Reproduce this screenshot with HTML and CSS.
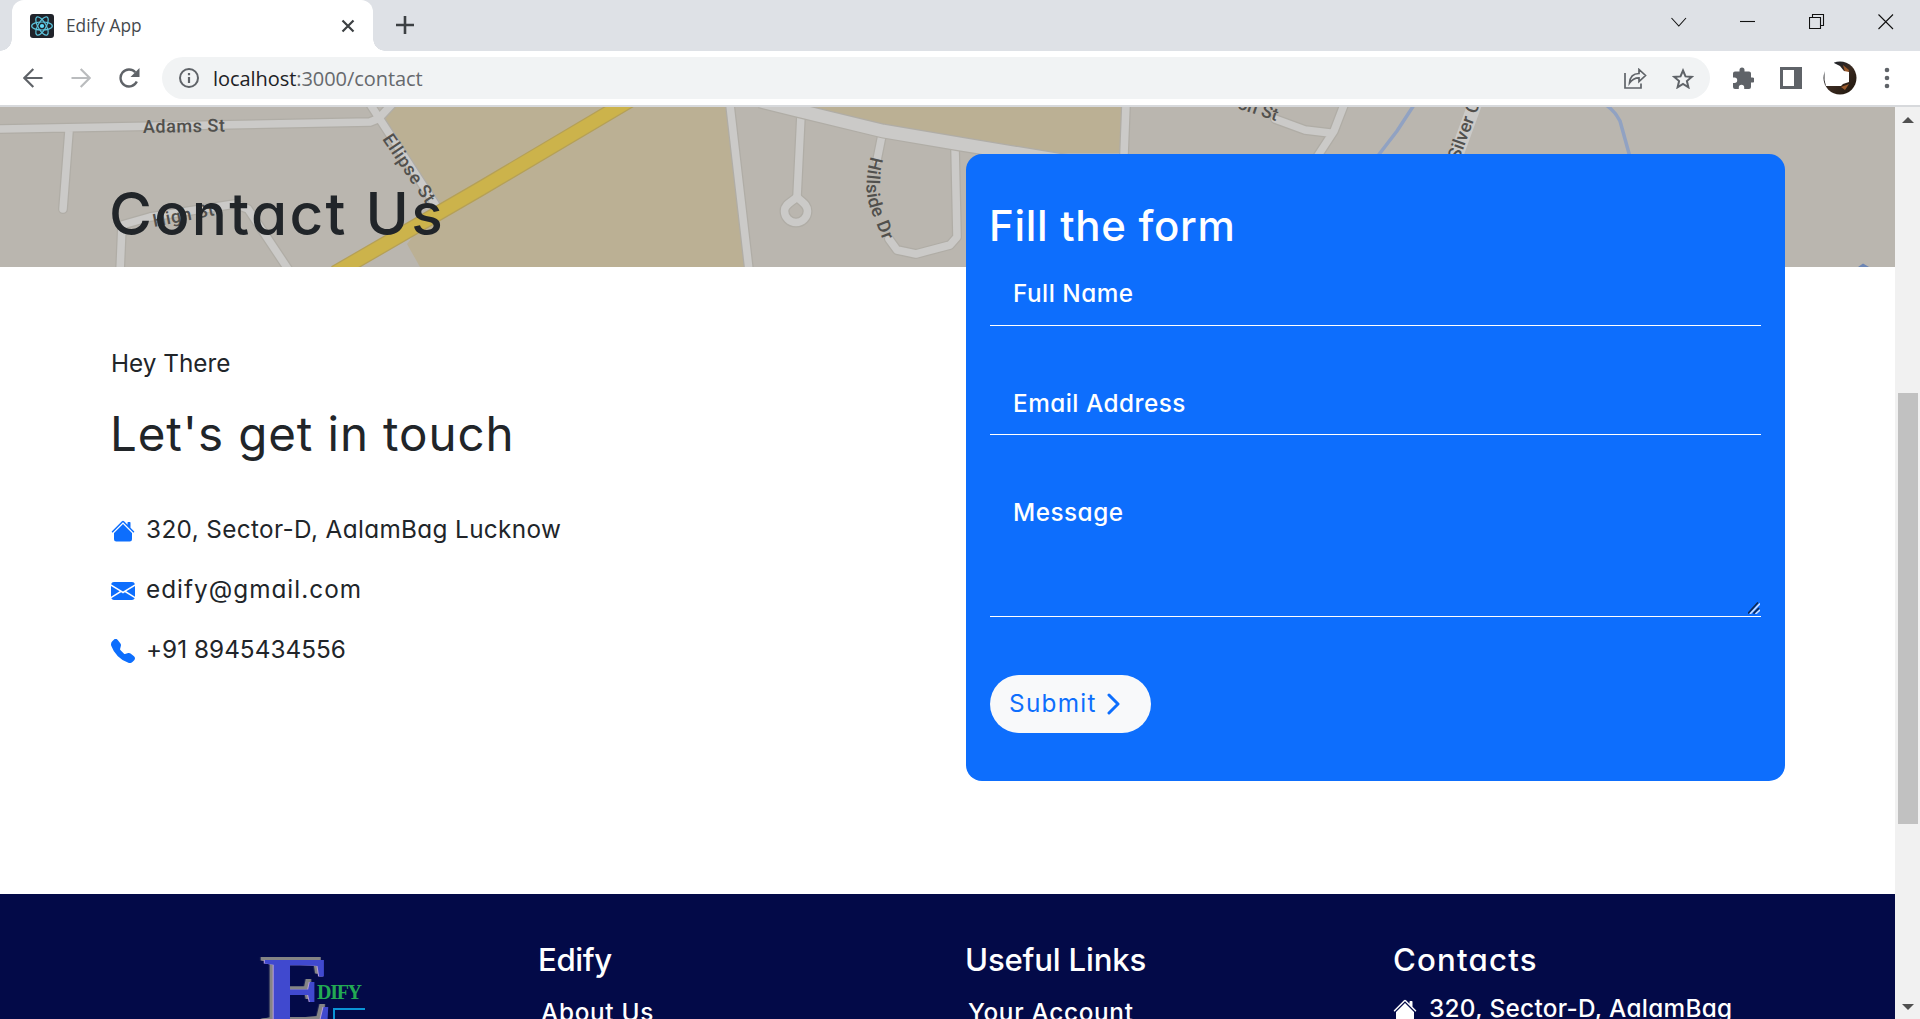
FILE: index.html
```html
<!DOCTYPE html>
<html lang="en">
<head>
<meta charset="utf-8">
<title>Edify App</title>
<link rel="stylesheet" href="styles.css">
</head>
<body>
<div class="tabstrip">
  <div class="tab">
    <svg class="favicon" width="24" height="24" viewBox="0 0 24 24"><rect width="24" height="24" rx="3" fill="#20232a"/><g fill="none" stroke="#5cc5de" stroke-width="1.2"><ellipse cx="12" cy="12" rx="10.3" ry="4"/><ellipse cx="12" cy="12" rx="10.3" ry="4" transform="rotate(60 12 12)"/><ellipse cx="12" cy="12" rx="10.3" ry="4" transform="rotate(120 12 12)"/></g><circle cx="12" cy="12" r="2.1" fill="#61dafb"/></svg>
    <span class="tab-title">Edify App</span>
    <svg class="tab-close" width="14" height="14" viewBox="0 0 14 14"><path d="M1.5 1.5l11 11M12.500 1.500l-11 11" stroke="#3c4043" stroke-width="2.2"/></svg>
  </div>
  <svg class="new-tab" width="18" height="18" viewBox="0 0 18 18"><path d="M9 0v18M0 9h18" stroke="#3c4043" stroke-width="2.6"/></svg>
  <div class="window-controls">
    <svg width="16" height="16" viewBox="0 0 16 16"><path d="M.5 4l7.300 8L15 4"/></svg>
    <svg width="16" height="16" viewBox="0 0 16 16"><path d="M0 7.500h15"/></svg>
    <svg width="16" height="16" viewBox="0 0 16 16"><path d="M.5 3.500h11v11H.5zM3.500 3.500v-3h11v11h-3"/></svg>
    <svg width="16" height="16" viewBox="0 0 16 16"><path d="M.5 .5l14.500 14.500M15 .5L.5 15"/></svg>
  </div>
</div>
<div class="toolbar">
  <svg class="nav" width="20" height="20" viewBox="0 0 20 20"><path d="M19.500 10H1.500M10.300 1L1.300 10l9 9" fill="none" stroke="#5f6368" stroke-width="2.200"/></svg>
  <svg class="nav" width="20" height="20" viewBox="0 0 20 20"><path d="M.5 10h18M9.700 1l9 9-9 9" fill="none" stroke="#babcbe" stroke-width="2.200"/></svg>
  <svg class="nav reload" width="22" height="20" viewBox="0 0 22 20"><path d="M17.800 13.500A8.500 8.500 0 1 1 16.300 4.200" fill="none" stroke="#5f6368" stroke-width="2.400"/><path d="M20.500 0v9h-9z" fill="#5f6368"/></svg>
  <div class="omnibox">
    <svg width="20" height="20" viewBox="0 0 20 20"><circle cx="10" cy="10" r="9" fill="none" stroke="#5f6368" stroke-width="2"/><path d="M10 5v2.200M10 9v6" stroke="#5f6368" stroke-width="2.200"/></svg>
    <span class="url">localhost<span class="url-rest">:3000/contact</span></span>
    <svg class="share" width="23" height="21" viewBox="0 0 23 21"><path d="M1 5v15h16v-4.500M5.500 15C6 8.500 10 5.500 15 5.500V1.500l6.500 6L15 13.500V9.800c-4 0-7 1.500-9.500 5.200z" fill="none" stroke="#5f6368" stroke-width="1.700"/></svg>
    <svg width="22" height="21" viewBox="0 0 22 21"><path d="M11 2.500l2.500 5.900 6.200.5-4.800 4.200 1.500 6.200L11 16l-5.400 3.300 1.500-6.200L2.300 8.900l6.200-.5z" fill="none" stroke="#5f6368" stroke-width="2"/></svg>
  </div>
  <svg class="puzzle" width="22" height="22" viewBox="0 0 22 22"><path d="M20.500 10.500H19V6.500a2 2 0 0 0-2-2h-4.500V3a2.500 2.500 0 0 0-5 0v1.500H3a2 2 0 0 0-2 2v4h1.500a2.700 2.700 0 0 1 0 5.400H1V20a2 2 0 0 0 2 2h3.800v-1.500a2.700 2.700 0 0 1 5.400 0V22H17a2 2 0 0 0 2-2v-4.500h1a2.500 2.500 0 0 0 .5-5z" fill="#5f6368"/></svg>
  <svg class="panel" width="22" height="22" viewBox="0 0 22 22"><path d="M0 0h22v22H0zM3 3v16h11V3z" fill="#5f6368" fill-rule="evenodd"/></svg>
  <svg class="avatar" width="34" height="34" viewBox="0 0 34 34"><defs><linearGradient id="av" x1="0" y1="0" x2="1" y2="1"><stop offset="0" stop-color="#10202f"/><stop offset=".5" stop-color="#3a2a20"/><stop offset="1" stop-color="#1d150c"/></linearGradient></defs><circle cx="17" cy="17" r="16.500" fill="url(#av)"/><path d="M20 4l6 5-1 5-3-3zM18 26l8-3-4 6z" fill="#9a5a2c"/><path d="M0 0h11v2l6 3 4 5 5 1v10l-6 2-2 2H3l-1.500-6V9L0 12z" fill="#fff"/></svg>
  <svg class="menu" width="6" height="22" viewBox="0 0 6 22"><g fill="#5f6368"><circle cx="3" cy="3" r="2.300"/><circle cx="3" cy="11" r="2.300"/><circle cx="3" cy="19" r="2.300"/></g></svg>
</div>
<div class="viewport">
  <main class="page">
    <header class="banner">
      <svg class="map" width="1895" height="160" viewBox="0 0 1895 160">
        <g fill="#bbb094"><path d="M392 0l-9 16 57 79-33 42 13 23h328L730 0z"/><path d="M808 0l75 18 77 12 100 16h64l2-46z"/></g>
        <g class="road-edge">
          <path d="M0 22L370 15l10-4M69 24l-6 78M370-3l65 100M380 10l13-14M120 165l2-47 28-8 85-13 13 5 42 63"/>
          <path d="M730-2l19 165M801 8l-4 82M882 28l-5 25M889 132l8 11 19 4 34-9 7-8-2-90M1126-2l-2 50M1275 12l30 11 25 3M1344-2l-10 26-17 26"/>
          <path d="M797 90c-5 5-12.500 7-12.500 14a11.500 11.500 0 0 0 23 0c0-7-6-9-10.500-14z"/>
        </g>
        <g class="road">
          <path d="M0 22L370 15l10-4M69 24l-6 78M370-3l65 100M380 10l13-14M120 165l2-47 28-8 85-13 13 5 42 63"/>
          <path d="M730-2l19 165M801 8l-4 82M882 28l-5 25M889 132l8 11 19 4 34-9 7-8-2-90M1126-2l-2 50M1275 12l30 11 25 3M1344-2l-10 26-17 26"/>
          <path d="M797 90c-5 5-12.500 7-12.500 14a11.500 11.500 0 0 0 23 0c0-7-6-9-10.500-14z"/>
        </g>
        <path d="M760-6l40 10 83 20 77 13 110 18" fill="none" stroke="#b0ada6" stroke-width="15"/>
        <path d="M760-6l40 10 83 20 77 13 110 18" fill="none" stroke="#cbcac8" stroke-width="12.500"/>
        <path d="M1452 60l24-66" fill="none" stroke="#cbcac8" stroke-width="14"/>
        <path d="M335 166L480 82 632-8" fill="none" stroke="#b5a057" stroke-width="15.500"/>
        <path d="M335 166L480 82 632-8" fill="none" stroke="#ccb34b" stroke-width="13"/>
        <g fill="none" stroke="#91a2c2" stroke-width="3.500"><path d="M1414-2l-17 26-20 26M1606-2q9 6 14 16l10 36"/></g>
        <path d="M1858 160l5-3.500 6 3.500z" fill="#6c85b4"/>
        <g class="street">
          <text transform="translate(143 26) rotate(-1)" textLength="82">Adams St</text>
          <text transform="translate(382 32) rotate(56)" textLength="79">Ellipse St</text>
          <text transform="translate(154 120) rotate(-11)" textLength="62">High St</text>
          <path id="hillside" d="M871 49Q861 84 873 108L884 136" fill="none"/>
          <text textLength="88"><textPath href="#hillside">Hillside Dr</textPath></text>
          <text transform="translate(1276 14) rotate(18)" text-anchor="end">on St</text>
          <text transform="translate(1459 54) rotate(-70)">Silver C</text>
        </g>
      </svg>
      <h1>Contact Us</h1>
    </header>
    <section class="contact">
      <div class="info">
        <p class="hello">Hey There</p>
        <h2>Let's get in touch</h2>
        <ul class="details">
          <li><svg class="icon" viewBox="0 0 16 16"><path d="M8.707 1.500a1 1 0 0 0-1.414 0L.646 8.146a.5.5 0 0 0 .708.708L8 2.207l6.646 6.647a.5.5 0 0 0 .708-.708L13 5.793V2.500a.5.5 0 0 0-.5-.5h-1a.5.5 0 0 0-.5.5v1.293z"/><path d="m8 3.293 6 6V13.500a1.500 1.500 0 0 1-1.500 1.500h-9A1.500 1.500 0 0 1 2 13.500V9.293z"/></svg><span class="street-address">320, Sector-D, AalamBag Lucknow</span></li>
          <li><svg class="icon" viewBox="0 0 16 16"><path d="M.05 3.555A2 2 0 0 1 2 2h12a2 2 0 0 1 1.950 1.555L8 8.414zM0 4.697v7.104l5.803-3.558zM6.761 8.830l-6.570 4.027A2 2 0 0 0 2 14h12a2 2 0 0 0 1.808-1.144l-6.570-4.027L8 9.586zM10.197 8.244L16 11.801V4.697z"/></svg><span class="email">edify@gmail.com</span></li>
          <li><svg class="icon" viewBox="0 0 16 16"><path d="M1.885.511a1.745 1.745 0 0 1 2.610.163L6.290 2.980c.329.423.445.974.315 1.494l-.547 2.190a.678.678 0 0 0 .178.643l2.457 2.457a.678.678 0 0 0 .644.178l2.189-.547a1.745 1.745 0 0 1 1.494.315l2.306 1.794c.829.645.905 1.870.163 2.611l-1.034 1.034c-.74.74-1.846 1.065-2.877.702a18.634 18.634 0 0 1-7.010-4.420 18.634 18.634 0 0 1-4.420-7.009c-.362-1.030-.037-2.137.703-2.877z"/></svg><span class="phone">+91 8945434556</span></li>
        </ul>
      </div>
      <form class="card">
        <h3>Fill the form</h3>
        <div class="field"><span>Full Name</span></div>
        <div class="field"><span>Email Address</span></div>
        <div class="field message"><span>Message</span>
          <svg class="grip" width="12" height="12" viewBox="0 0 12 12"><path d="M0 11.500L10 .5M5.500 11.500L11 6" stroke="#10284f" stroke-width="1.600"/><path d="M2 12L12 1.500M7.500 12L12 8" stroke="#cfe0ff" stroke-width="1.600"/></svg>
        </div>
        <button class="submit" type="button"><span>Submit</span><svg width="14" height="22" viewBox="0 0 14 22"><path d="M2 2l9 9-9 9" fill="none" stroke="#0d6efd" stroke-width="3" stroke-linecap="round" stroke-linejoin="round"/></svg></button>
      </form>
    </section>
    <footer class="footer">
      <svg class="logo" width="110" height="70" viewBox="0 0 110 70">
        <text class="logo-e" transform="translate(5 76) scale(1.06 1)">E</text>
        <text class="logo-word" x="59" y="50" textLength="45">DIFY</text>
        <path d="M76 70V60h31" fill="none" stroke="#0a94d6" stroke-width="2"/>
      </svg>
      <div class="col"><h4 class="brand">Edify</h4><p class="link">About Us</p></div>
      <div class="col"><h4 class="useful">Useful Links</h4><p class="link">Your Account</p></div>
      <div class="col"><h4 class="contacts">Contacts</h4><p class="address"><svg class="icon" viewBox="0 0 16 16"><path d="M8.707 1.500a1 1 0 0 0-1.414 0L.646 8.146a.5.5 0 0 0 .708.708L8 2.207l6.646 6.647a.5.5 0 0 0 .708-.708L13 5.793V2.500a.5.5 0 0 0-.5-.5h-1a.5.5 0 0 0-.5.5v1.293z"/><path d="m8 3.293 6 6V13.500a1.500 1.500 0 0 1-1.500 1.500h-9A1.500 1.500 0 0 1 2 13.500V9.293z"/></svg><span>320, Sector-D, AalamBag</span></p></div>
    </footer>
  </main>
  <div class="scrollbar"><i class="arrow up"></i><i class="thumb"></i><i class="arrow down"></i></div>
</div>
</body>
</html>
```
FILE: styles.css
```css
* { box-sizing: border-box; }
body { margin: 0; width: 1920px; height: 1019px; overflow: hidden; display: flex; flex-direction: column; background: #fff; color: #212529; font-family: Inter, "Open Sans", sans-serif; font-feature-settings: "cv11"; }
h1, h2, h3, h4, p, ul { margin: 0; padding: 0; font-weight: 500; white-space: nowrap; }
svg { flex: none; display: block; }

.tabstrip { flex: none; height: 51px; background: #dee1e6; display: flex; padding-left: 12px; }
.tab { position: relative; width: 361px; background: #fff; border-radius: 12px 12px 0 0; display: flex; align-items: center; padding: 0 18px 0 18px; }
.tab::before, .tab::after { content: ""; position: absolute; bottom: 0; width: 12px; height: 12px; }
.tab::before { left: -12px; background: radial-gradient(circle at 0 0, transparent 11.5px, #fff 12px); }
.tab::after { right: -12px; background: radial-gradient(circle at 100% 0, transparent 11.5px, #fff 12px); }
.tab-title { margin: 0 0 0 12px; font: 17.300px/24px "Open Sans", sans-serif; color: #45494d; white-space: nowrap; }
.tab-close { margin-left: auto; }
.new-tab { margin: 16px 0 0 23px; }
.window-controls { margin: 14px 26px 0 auto; display: flex; gap: 53px; }
.window-controls path { fill: none; stroke: #111; stroke-width: 1.1; }

.toolbar { flex: none; height: 56px; border-bottom: 2px solid #d7d9dc; display: flex; align-items: center; padding-left: 23px; }
.nav { margin-right: 28px; }
.reload { margin-right: 21px; }
.omnibox { width: 1548px; height: 42px; border-radius: 21px; background: #f1f3f4; display: flex; align-items: center; padding: 0 16px 0 17px; }
.url { margin: 1px 0 0 14px; font: 20px/28px "Open Sans", sans-serif; letter-spacing: -.06px; color: #202124; white-space: nowrap; }
.url-rest { color: #66696d; }
.share { margin: 0 25px 0 auto; }
.puzzle { margin-left: 22px; }
.panel { margin-left: 26px; }
.avatar { margin-left: 21px; }
.menu { margin-left: 27px; }

.viewport { flex: 1; min-height: 0; display: flex; }
.page { width: 1895px; overflow: hidden; display: flex; flex-direction: column; }
.banner { position: relative; flex: none; height: 160px; background: #bab6af; padding: 71px 0 0 109px; }
.map { position: absolute; inset: 0; }
.road, .road-edge { fill: none; stroke: #cbcac8; stroke-width: 7.500; stroke-linecap: round; stroke-linejoin: round; }
.road-edge { stroke: #b0ada6; stroke-width: 10; }
.street { font: 500 18px Roboto, sans-serif; fill: #51504d; stroke: none; }
h1 { position: relative; font-size: 58.500px; line-height: 72px; letter-spacing: 2.300px; }

.contact { flex: none; height: 627px; display: flex; justify-content: space-between; align-items: flex-start; padding: 0 110px 0 111px; }
.info { padding-top: 78px; }
.hello { font-size: 24.300px; line-height: 36px; font-weight: 400; }
h2 { margin-top: 24px; font-size: 47.500px; line-height: 58px; font-weight: 400; letter-spacing: .9px; margin-left: -1px; }
.details { margin-top: 48px; list-style: none; display: flex; flex-direction: column; gap: 24px; font-size: 24.300px; line-height: 36px; }
.details li { display: flex; align-items: center; gap: 11px; font-weight: 400; }
.icon { width: 24px; height: 24px; margin-top: 3px; fill: #0d6efd; }
.street-address { letter-spacing: .37px; }
.email { letter-spacing: 1.030px; }
.phone { letter-spacing: .03px; }

.card { position: relative; margin-top: -113px; width: 819px; height: 627px; border-radius: 16px; background: #0d6efd; color: #fff; padding: 47px 24px 48px; }
h3 { font-size: 42px; line-height: 50px; letter-spacing: .7px; margin-left: -1px; }
.field { height: 56px; margin: 19px 0 53px; border-bottom: 1px solid #fff; padding: 5px 23px; font-size: 24.300px; line-height: 36px; font-weight: 500; letter-spacing: .5px; white-space: nowrap; }
.field + .field { margin-top: 0; padding-top: 6px; }
.field.message { position: relative; height: 129px; margin-bottom: 58px; }
.grip { position: absolute; right: 1px; bottom: 2px; }
.submit { width: 161px; height: 58px; border: 0; border-radius: 29px; background: #f8f9fa; color: #0d6efd; display: flex; align-items: center; gap: 12px; padding: 0 19px; font: 400 24.300px/36px Inter, sans-serif; font-feature-settings: "cv11"; letter-spacing: 1.300px; }
.submit span { margin: -3px -1.300px 0 0; }

.footer { flex: none; height: 125px; background: #030a48; color: #fff; display: grid; grid-template-columns: 427px 427px 428px 1fr; padding: 47px 0 0 111px; }
.logo { margin: 8px 0 0 147px; }
.logo-e { font: bold 100px "Liberation Serif", serif; fill: #4049cf; filter: drop-shadow(-1px 0 0 #b9a0d8) drop-shadow(-3px -3px 0 #858585); }
.logo-word { font: bold 20px "Liberation Serif", serif; fill: #22a953; }
h4 { font-size: 31.200px; line-height: 38px; }
.brand { letter-spacing: -.4px; }
.useful { letter-spacing: -.2px; }
.contacts { letter-spacing: 1.200px; }
.link { margin: 15px 0 0 3px; font-size: 24.300px; line-height: 36px; letter-spacing: .7px; }
.address { margin-top: 11px; display: flex; align-items: center; gap: 12px; font-size: 24.300px; line-height: 36px; letter-spacing: .32px; }
.address .icon { fill: #fff; margin-top: 4px; }

.scrollbar { width: 25px; background: #f1f1f1; display: flex; flex-direction: column; align-items: center; padding: 10px 0 9px; }
.arrow { border: 6px solid transparent; }
.up { border-top: 0; border-bottom-color: #505050; }
.down { margin-top: auto; border-bottom: 0; border-top-color: #505050; }
.thumb { width: 20px; height: 431px; margin-top: 270px; background: #c1c1c1; }
```
